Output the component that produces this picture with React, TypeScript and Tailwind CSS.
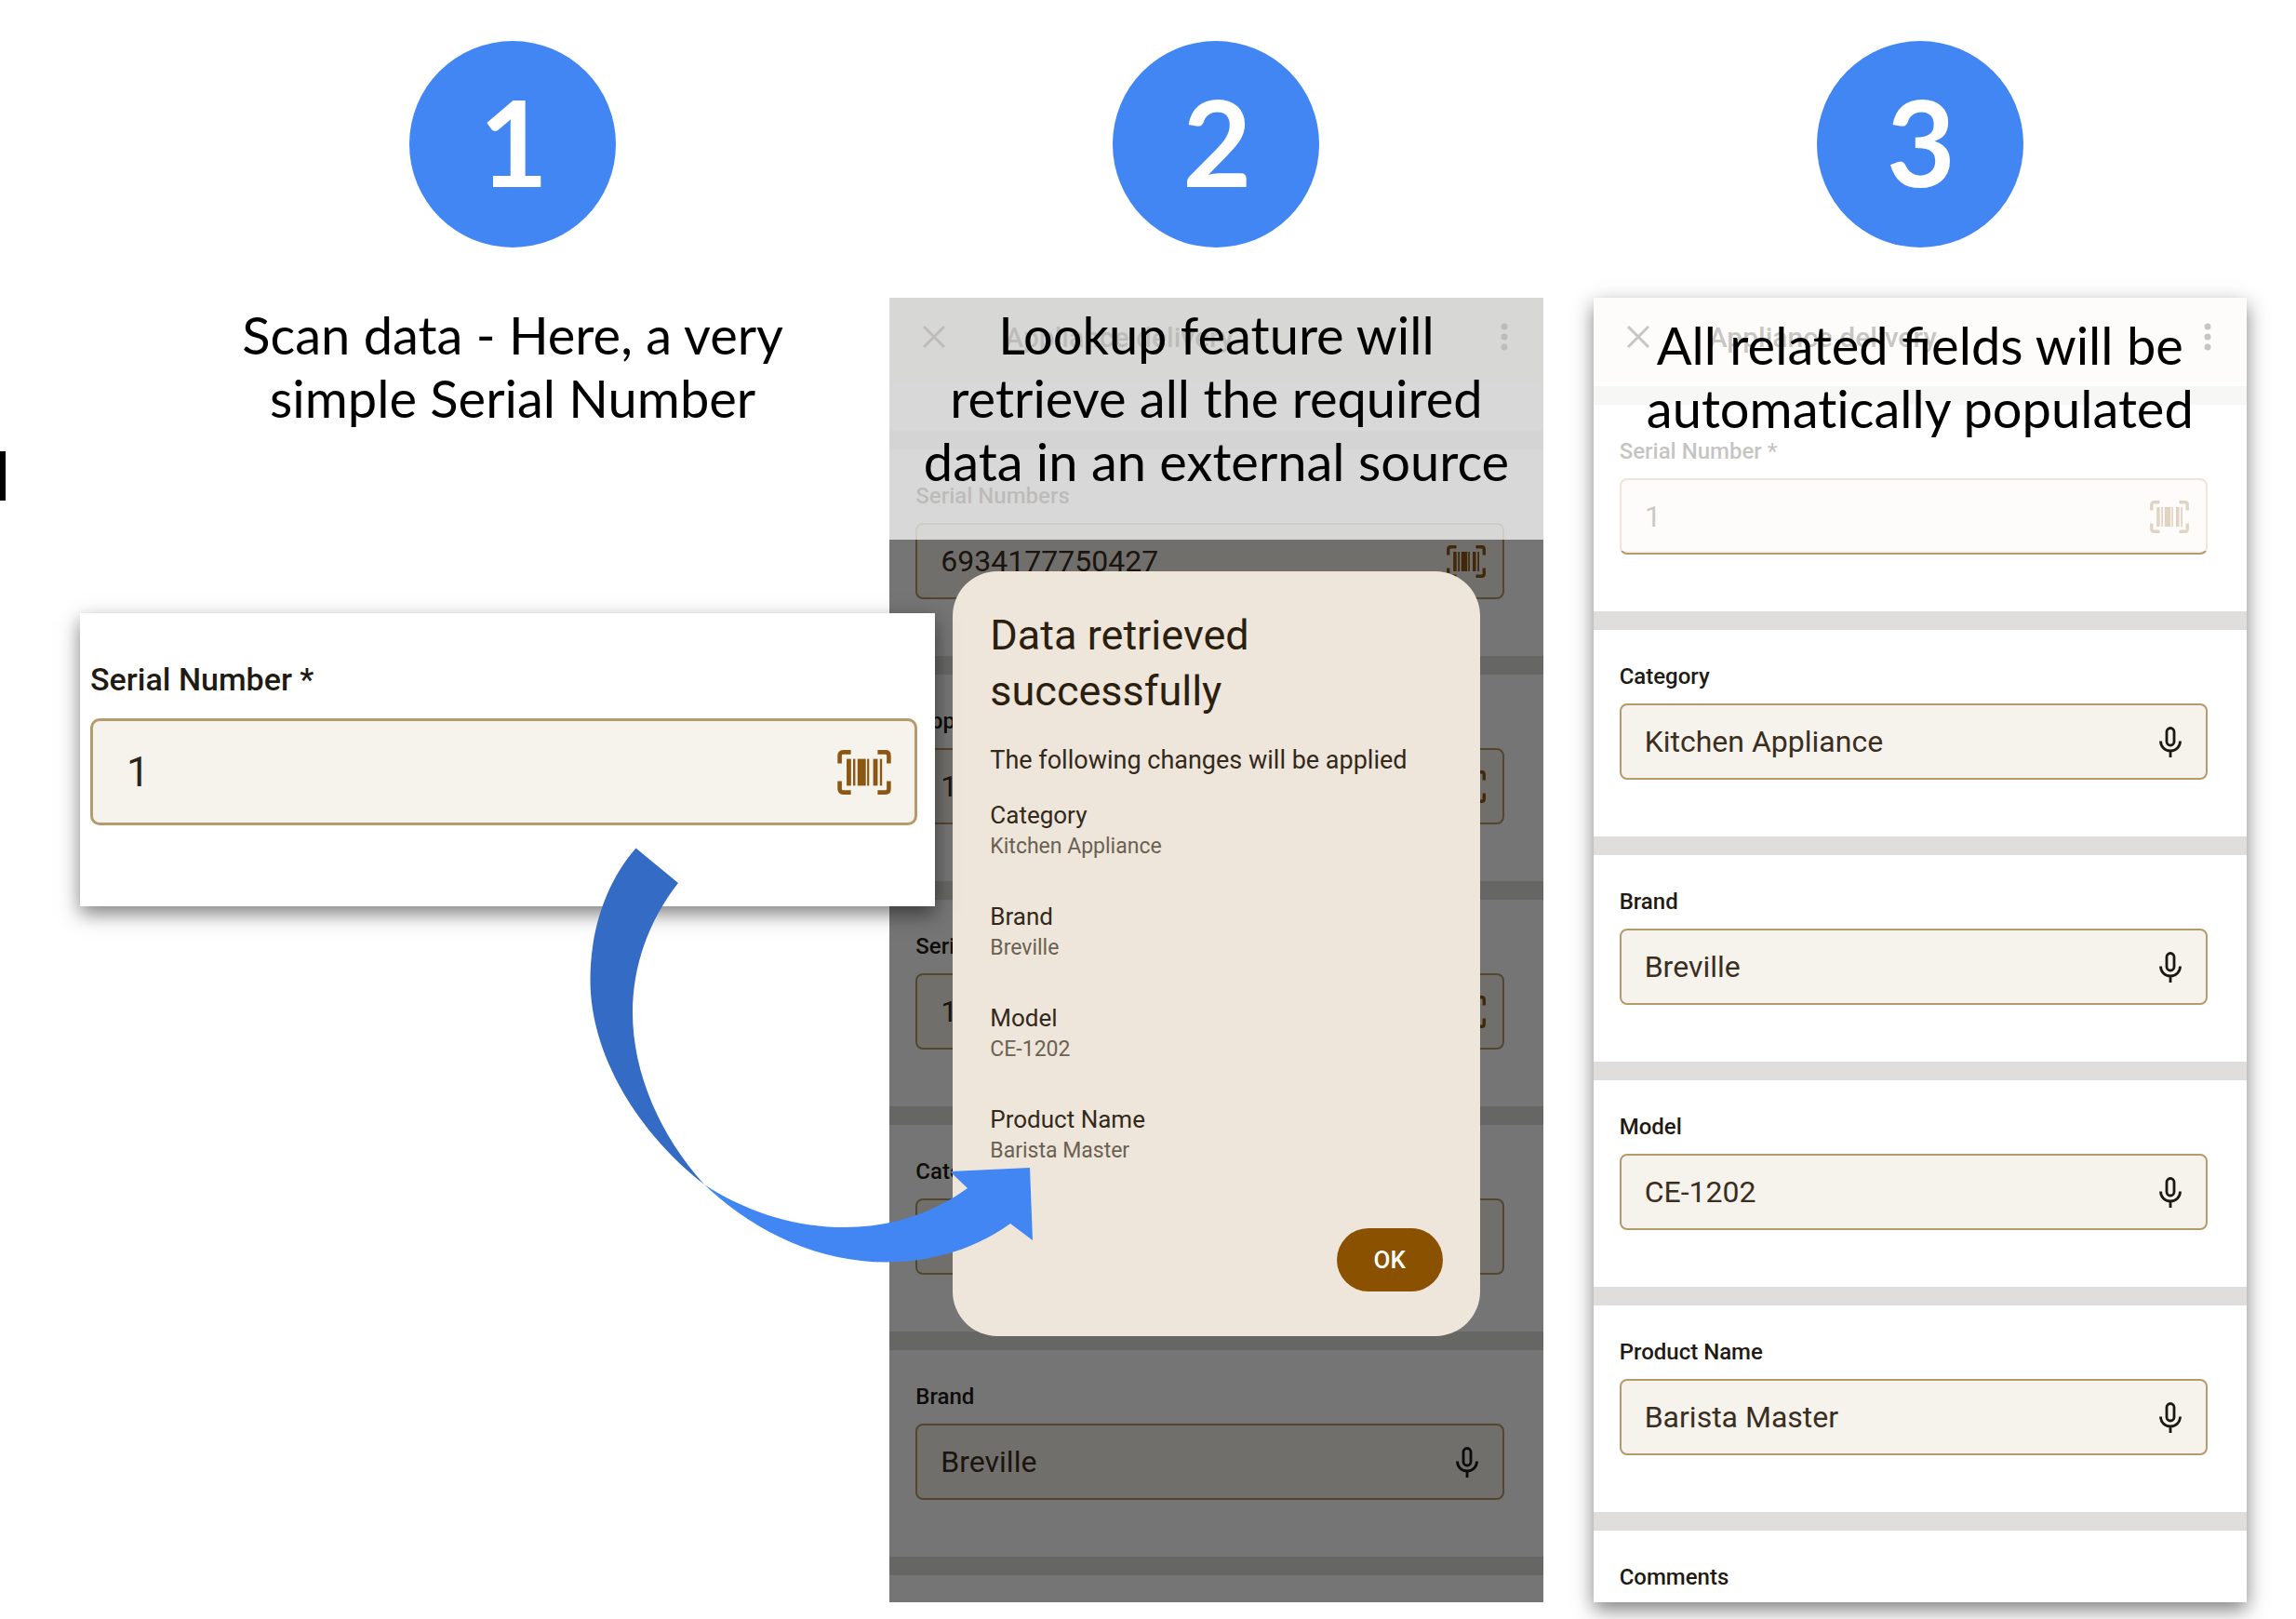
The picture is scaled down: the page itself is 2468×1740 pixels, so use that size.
import { useId } from "react";
import type { ReactNode } from "react";

type IconKind = "barcode" | "mic";

interface FieldProps {
  label: string;
  value: string;
  icon?: IconKind;
}

function BarcodeIcon({ className }: { className: string }) {
  return (
    <svg viewBox="0 0 24 20" className={className} aria-hidden="true">
      <g fill="none" stroke="currentColor" strokeWidth="1.9">
        <path d="M6 1H2.5Q1 1 1 2.5V6" />
        <path d="M18 1h3.5Q23 1 23 2.5V6" />
        <path d="M6 19H2.5Q1 19 1 17.5V14" />
        <path d="M18 19h3.5Q23 19 23 17.5V14" />
      </g>
      <g fill="currentColor">
        <rect x="4.1" y="4" width="2" height="12" />
        <rect x="7" y="4" width="1" height="12" />
        <rect x="9" y="4" width="3.7" height="12" />
        <rect x="13.3" y="4" width=".9" height="12" />
        <rect x="16" y="4" width="2" height="12" />
        <rect x="19" y="4" width="1" height="12" />
      </g>
    </svg>
  );
}

function MicIcon() {
  return (
    <svg viewBox="0 0 24 33" className="mr-[26px] h-[33px] w-6 shrink-0 text-[#1c1813]" fill="none" stroke="currentColor" strokeWidth="2.8" aria-hidden="true">
      <rect x="8" y="1.5" width="8" height="18.5" rx="4" />
      <path d="M1.5 15.5C1.5 21.5 6 26 12 26s10.5-4.5 10.5-10.5M12 26v7" />
    </svg>
  );
}

function Field({ label, value, icon }: FieldProps) {
  const id = useId();
  return (
    <div className="bg-white pt-[35px] pr-[42px] pb-[61px] pl-7">
      <label htmlFor={id} className="block h-11 text-[24px] leading-[30px] font-medium text-[#1f1b13]">
        {label}
      </label>
      <div className="flex h-[82px] items-center rounded-lg border-2 border-[#b59a6c] bg-[#f6f2ec]">
        <input id={id} defaultValue={value} className="min-w-0 flex-1 bg-transparent pl-[25px] text-[32px] text-[#3a2e1f] outline-none" />
        {icon === "barcode" && <BarcodeIcon className="mr-[18px] h-[35px] w-[42px] shrink-0 text-[#8b5713]" />}
        {icon === "mic" && <MicIcon />}
      </div>
    </div>
  );
}

const Divider = () => <div className="h-5 bg-[#dfdedd]" />;

function AppBar() {
  return (
    <header className="relative flex h-[90px] items-center bg-[#f6f2ec] pr-9 pb-1.5 pl-9 text-[#2b241a]">
      <button type="button" aria-label="Close">
        <svg viewBox="0 0 24 24" className="size-6" fill="none" stroke="currentColor" strokeWidth="3" aria-hidden="true">
          <path d="M1 1l22 22M23 1L1 23" />
        </svg>
      </button>
      <h2 className="ml-16 flex-1 text-[30px] font-medium">Appliance delivery</h2>
      <button type="button" aria-label="More options">
        <svg viewBox="0 0 12 30" className="h-[30px] w-3" fill="currentColor" aria-hidden="true">
          <circle cx="6" cy="4" r="3.5" />
          <circle cx="6" cy="15" r="3.5" />
          <circle cx="6" cy="26" r="3.5" />
        </svg>
      </button>
    </header>
  );
}

function Step({ number, children }: { number: number; children: ReactNode }) {
  return (
    <section className="flex flex-col">
      <div className="mx-auto mb-[54px] flex size-[222px] items-center justify-center rounded-full bg-[#4286f4] pb-1.5 pl-0.5 font-['Lato',sans-serif] text-[128px] leading-none font-bold text-white">
        {number}
      </div>
      <div className="relative">{children}</div>
    </section>
  );
}

const CAPTION = "px-8 text-center font-['Lato',sans-serif] text-[56px] leading-[68px] text-black";

const CHANGES = [
  { name: "Category", value: "Kitchen Appliance" },
  { name: "Brand", value: "Breville" },
  { name: "Model", value: "CE-1202" },
  { name: "Product Name", value: "Barista Master" },
];

function ResultDialog() {
  return (
    <div
      role="dialog"
      aria-label="Data retrieved successfully"
      className="absolute inset-x-[68px] top-[294px] flex flex-col rounded-[48px] bg-[#eee6da] px-10 pt-[39px] pb-12 text-[#33291b]"
    >
      <h2 className="max-w-[400px] text-[45px] leading-[60px] text-[#2b2010]">Data retrieved successfully</h2>
      <p className="mt-7 text-[27px] leading-[32px]">The following changes will be applied</p>
      <dl className="mt-[26px]">
        {CHANGES.map((c) => (
          <div key={c.name} className="h-[109px]">
            <dt className="text-[26px] leading-[34px] text-[#33291b]">{c.name}</dt>
            <dd className="text-[23px] leading-[34px] text-[#6b6153]">{c.value}</dd>
          </div>
        ))}
      </dl>
      <button type="button" className="mt-[25px] h-[68px] w-[114px] self-end rounded-full bg-[#895100] text-[26px] font-medium text-white">
        OK
      </button>
    </div>
  );
}

function Arrow() {
  return (
    <svg viewBox="634 911 477 447" className="pointer-events-none absolute top-[591px] left-[434px] z-20 h-[447px] w-[477px]" aria-hidden="true">
      <path fill="#346bc4" d="M683.5 911.5C650 950 634.5 1002 634.5 1053C634.5 1136 688 1219 757 1273C711 1222 680 1155 680 1088C680 1038 697 990 729 949Z" />
      <path fill="#4286f4" d="M757 1273C805 1304 857 1319 908 1319C957 1319 1001 1305 1040 1277L1021 1259L1107 1255L1110 1333L1086 1315C1049 1342 1002 1356.5 952 1356.5C880 1356 812 1325 757 1273Z" />
    </svg>
  );
}

export default function App() {
  const serialId = useId();
  return (
    <main className="relative overflow-hidden bg-white font-['Roboto',sans-serif]">
      <div className="absolute top-[485px] left-0 h-[53px] w-1.5 bg-black" />
      <div className="grid grid-cols-3 gap-[54px] pt-11 pr-[53px] pb-[18px] pl-[200px]">
        <Step number={1}>
          <p className={`${CAPTION} pt-1.5`}>Scan data - Here, a very simple Serial Number</p>
          <div className="relative z-10 mt-[197px] -mr-[103px] -ml-[114px] bg-white pt-[51px] pr-[19px] pb-[87px] pl-[11px] shadow-[0_8px_20px_rgba(0,0,0,0.5)]">
            <label htmlFor={serialId} className="block h-[62px] text-[34px] leading-[40px] font-medium text-[#1f1b13]">
              Serial Number *
            </label>
            <div className="flex h-[115px] items-center rounded-[10px] border-[3px] border-[#b59a6c] bg-[#f6f2ec]">
              <input id={serialId} defaultValue="1" className="min-w-0 flex-1 bg-transparent pl-9 text-[44px] text-[#2b241a] outline-none" />
              <BarcodeIcon className="mr-[25px] h-12 w-[58px] shrink-0 text-[#8b5713]" />
            </div>
          </div>
          <Arrow />
        </Step>

        <Step number={2}>
          <div className="relative overflow-hidden">
            <AppBar />
            {/* first field is scrolled under the app bar */}
            <div className="relative -z-10 -mt-[169px]">
              <Field label="" value="" />
            </div>
            <Divider />
            <Field label="Serial Numbers" value="6934177750427" icon="barcode" />
            <Divider />
            <Field label="Appliance" value="1" icon="barcode" />
            <Divider />
            <Field label="Serial Number *" value="1" icon="barcode" />
            <Divider />
            <Field label="Category" value="" />
            <Divider />
            <Field label="Brand" value="Breville" icon="mic" />
            <Divider />
            <div className="h-[29px] bg-white" />
            <div className="absolute inset-0 bg-black/54" />
            <ResultDialog />
          </div>
          <p className={`${CAPTION} absolute inset-x-0 top-0 bg-white/72 pt-1.5 pb-[50px]`}>
            Lookup feature will retrieve all the required data in an external source
          </p>
        </Step>

        <Step number={3}>
          <div className="bg-white shadow-[0_8px_20px_rgba(0,0,0,0.5)]">
            <AppBar />
            <div className="h-[5px]" />
            <Divider />
            <Field label="Serial Number *" value="1" icon="barcode" />
            <Divider />
            <Field label="Category" value="Kitchen Appliance" icon="mic" />
            <Divider />
            <Field label="Brand" value="Breville" icon="mic" />
            <Divider />
            <Field label="Model" value="CE-1202" icon="mic" />
            <Divider />
            <Field label="Product Name" value="Barista Master" icon="mic" />
            <Divider />
            <h3 className="px-7 pt-[35px] pb-3 text-[24px] leading-[30px] font-medium text-[#1f1b13]">Comments</h3>
          </div>
          <p className={`${CAPTION} absolute inset-x-0 top-0 bg-white/74 pt-[17px] pb-[119px]`}>
            {/* zero-width non-joiner keeps the "ti" pair from joining */}
            {"All related fields will be automat\u200cically populated"}
          </p>
        </Step>
      </div>
    </main>
  );
}
